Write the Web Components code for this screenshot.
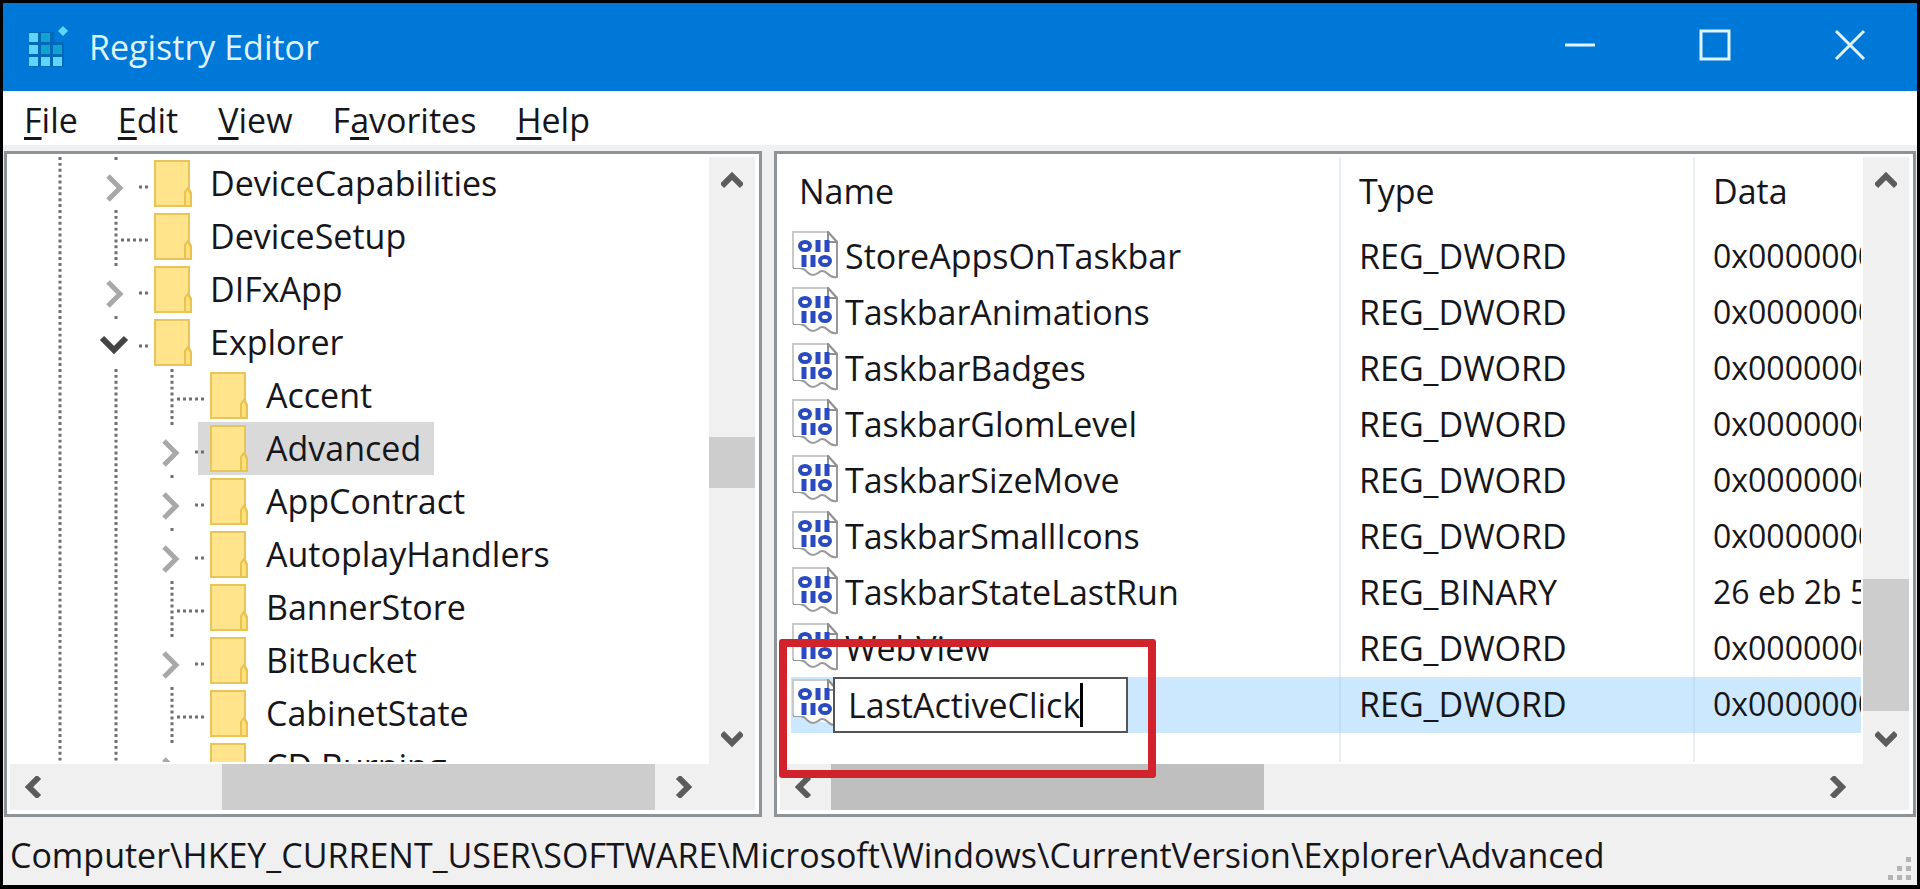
<!DOCTYPE html>
<html lang="en">
<head>
<meta charset="utf-8">
<title>Registry Editor</title>
<style>
  html, body {
    height: 100%;
    margin: 0;
  }
  body {
    background: #000;
    color: #16161a;
    font: 34px/48px "Open Sans", "Noto Sans", sans-serif;
  }
</style>
</head>
<body>
<reg-window>
  <title-bar slot="title">Registry Editor</title-bar>

  <menu-bar slot="menu">
    <menu-item><u>F</u>ile</menu-item>
    <menu-item><u>E</u>dit</menu-item>
    <menu-item><u>V</u>iew</menu-item>
    <menu-item>F<u>a</u>vorites</menu-item>
    <menu-item><u>H</u>elp</menu-item>
  </menu-bar>

  <scroll-pane slot="tree" v="232 51 228" h="164 433 6">
    <div role="tree" aria-label="Keys">
      <tree-key level="1" state="closed">DeviceCapabilities</tree-key>
      <tree-key level="1">DeviceSetup</tree-key>
      <tree-key level="1" state="closed">DIFxApp</tree-key>
      <tree-key level="1" state="open">Explorer</tree-key>
      <tree-key level="2">Accent</tree-key>
      <tree-key level="2" state="closed" selected>Advanced</tree-key>
      <tree-key level="2" state="closed">AppContract</tree-key>
      <tree-key level="2" state="closed">AutoplayHandlers</tree-key>
      <tree-key level="2">BannerStore</tree-key>
      <tree-key level="2" state="closed">BitBucket</tree-key>
      <tree-key level="2">CabinetState</tree-key>
      <tree-key level="2" state="closed">CD Burning</tree-key>
    </div>
  </scroll-pane>

  <scroll-pane slot="values" v="374 132 5" h="3 433 551" active>
    <value-list></value-list>
    <call-out slot="overlay"></call-out>
  </scroll-pane>

  <status-bar slot="status">Computer\HKEY_CURRENT_USER\SOFTWARE\Microsoft\Windows\CurrentVersion\Explorer\Advanced</status-bar>
</reg-window>

<template id="reg-window">
  <style>
    :host {
      display: flex;
      flex-direction: column;
      box-sizing: border-box;
      height: 100vh;
      border: 3px solid #000;
      border-bottom-width: 4px;
      background: #f0f0f0;
    }
    main {
      flex: 1;
      min-height: 0;
      display: grid;
      grid-template-columns: minmax(0, 758fr) minmax(0, 1142fr);
      grid-template-rows: minmax(0, 1fr);
      gap: 12px;
      padding: 0 1px;
    }
  </style>
  <slot name="title"></slot>
  <slot name="menu"></slot>
  <main>
    <slot name="tree"></slot>
    <slot name="values"></slot>
  </main>
  <slot name="status"></slot>
</template>

<template id="title-bar">
  <style>
    :host {
      display: flex;
      align-items: center;
      height: 88px;
      padding-left: 26px;
      background: #0078d7;
      color: #dff4ff;
    }
    .logo {
      margin-right: 18px;
    }
    h1 {
      flex: 1;
      margin: 0;
      font: inherit;
    }
    button {
      width: 135px;
      height: 84px;
      margin-bottom: 4px;
      padding: 0;
      border: 0;
      background: none;
      color: inherit;
    }
    button svg {
      display: block;
      margin: auto;
      fill: none;
      stroke: currentColor;
      stroke-width: 3;
    }
  </style>
  <svg class="logo" width="42" height="42" viewBox="0 0 42 42" aria-hidden="true">
    <path fill="#0068b8" d="M0 6h25v10h10v25H0z"/>
    <g fill="#5fd6ff">
      <path d="M0 7h9v9H0zM0 19h9v9H0zM0 31h9v9H0zM12 31h9v9h-9zM24 31h9v9h-9z"/>
      <path d="M34 0l5 5-5 5-5-5z"/>
    </g>
    <path fill="#0fa3d2" d="M12 7h9v9h-9zM12 19h9v9h-9zM24 19h9v9h-9z"/>
  </svg>
  <h1><slot></slot></h1>
  <button type="button" aria-label="Minimize">
    <svg width="32" height="32" viewBox="0 0 32 32"><path d="M1 16h30"/></svg>
  </button>
  <button type="button" aria-label="Maximize">
    <svg width="32" height="32" viewBox="0 0 32 32"><path d="M2 2h28v28H2z"/></svg>
  </button>
  <button type="button" aria-label="Close">
    <svg width="32" height="32" viewBox="0 0 32 32"><path d="M2 2l28 28M30 2L2 30"/></svg>
  </button>
</template>

<template id="menu-bar">
  <style>
    :host {
      display: flex;
      height: 54px;
      padding-left: 1px;
      border-bottom: 6px solid #f0f0f0;
      background: #fff;
    }
  </style>
  <slot></slot>
</template>

<template id="menu-item">
  <style>
    :host {
      display: block;
    }
    button {
      padding: 5px 20px 0;
      border: 0;
      background: none;
      color: inherit;
      font: inherit;
    }
    ::slotted(u) {
      text-decoration-thickness: 3px;
      text-underline-offset: 4px;
      text-decoration-skip-ink: none;
    }
  </style>
  <button type="button"><slot></slot></button>
</template>

<template id="scroll-pane">
  <style>
    :host {
      position: relative;
      display: grid;
      grid-template: minmax(0, 1fr) 46px / minmax(0, 1fr) 46px;
      min-width: 0;
      border: 3px solid #8e9398;
      padding: 3px 4px 4px 3px;
      background: #fff;
    }
    .view {
      overflow: hidden;
      margin: 0 2px 2px 0;
    }
    .corner {
      background: #f0f0f0;
    }
  </style>
  <div class="view"><slot></slot></div>
  <scroll-bar class="v" vertical></scroll-bar>
  <scroll-bar class="h"></scroll-bar>
  <div class="corner"></div>
  <slot name="overlay"></slot>
</template>

<template id="scroll-bar">
  <style>
    :host {
      display: flex;
      background: #f0f0f0;
    }
    :host([vertical]) {
      flex-direction: column;
    }
    button {
      flex: 0 0 48px;
      display: grid;
      place-items: center;
      padding: 0;
      border: 0;
      background: none;
    }
    svg {
      fill: none;
      stroke: #5c5c5c;
      stroke-width: 6;
    }
    :host([vertical]) svg {
      transform: rotate(90deg);
    }
    .thumb {
      background: #cdcdcd;
    }
    :host([active]:not([vertical])) .thumb {
      background: #bfbfbf;
    }
  </style>
  <button type="button" aria-label="Scroll back">
    <svg width="22" height="22" viewBox="0 0 22 22"><path d="M16 1L6 11l10 10"/></svg>
  </button>
  <div class="before"></div>
  <div class="thumb"></div>
  <div class="after"></div>
  <button type="button" aria-label="Scroll forward">
    <svg width="22" height="22" viewBox="0 0 22 22"><path d="M4 1l10 10L4 21"/></svg>
  </button>
</template>

<template id="tree-key">
  <style>
    :host {
      display: flex;
      height: 53px;
      padding-left: 20px;
      white-space: nowrap;
    }
    svg {
      flex: none;
      display: block;
    }
    .guide {
      overflow: visible;
      position: relative;
      z-index: 1;
      fill: none;
    }
    .dots {
      stroke: #6f6f6f;
      stroke-width: 3;
    }
    .chevron {
      stroke: #a8a8a8;
      stroke-width: 5;
    }
    .chevron.open {
      stroke: #444;
      stroke-width: 6;
    }
    .label {
      display: flex;
      align-items: center;
      padding: 0 13px 0 12px;
    }
    .label span {
      margin: 0 0 2px 18px;
    }
    :host([selected]) .label {
      background: #d9d9d9;
    }
  </style>
  <div class="label">
    <svg width="38" height="47" viewBox="0 0 38 47" aria-hidden="true">
      <path fill="#ffe48c" stroke="#e8c55a" stroke-width="2" d="M1 1h34v28l2 4v13H1z"/>
      <path fill="#ffe07a" stroke="#e8c252" stroke-width="2" d="M31 46V32l3-4 3 6v12z"/>
    </svg>
    <span><slot></slot></span>
  </div>
</template>

<template id="value-list">
  <style>
    :host {
      display: block;
      height: 100%;
      padding-left: 11px;
    }
    table {
      width: 100%;
      table-layout: fixed;
      border-collapse: collapse;
    }
    .name { width: 549px; }
    .type { width: 354px; }
    th, td {
      box-sizing: border-box;
      height: 56px;
      padding: 0;
      overflow: hidden;
      text-align: left;
      font-weight: normal;
      white-space: nowrap;
    }
    th {
      height: 72px;
      padding: 0 0 4px 8px;
    }
    td + td, th + th {
      padding-left: 18px;
      border-left: 2px solid #e9eff5;
    }
    td + td {
      padding-bottom: 2px;
    }
    td.data {
      font-size: 32px;
    }
    tr.selected td {
      background: #cce8ff;
    }
    tr.selected td + td {
      border-left-color: #bfdff6;
    }
    .cell {
      display: flex;
      align-items: center;
      height: 56px;
    }
    .cell svg {
      flex: none;
      margin: 0 7px 4px 1px;
    }
    .cell span {
      margin-bottom: 2px;
    }
    .edit {
      display: flex;
      align-items: center;
      box-sizing: border-box;
      position: relative;
      width: 295px;
      height: 56px;
      margin-left: -12px;
      padding-left: 13px;
      border: 2px solid #555;
      background: #fff;
    }
    input {
      field-sizing: content;
      padding: 0;
      border: 0;
      outline: 0;
      background: none;
      color: inherit;
      font: inherit;
    }
    .caret {
      width: 3px;
      height: 44px;
      background: #000;
    }
  </style>
  <table>
    <thead>
      <tr><th class="name" scope="col">Name</th><th class="type" scope="col">Type</th><th scope="col">Data</th></tr>
    </thead>
    <tbody></tbody>
  </table>
</template>

<template id="call-out">
  <style>
    :host {
      position: absolute;
      top: 485px;
      left: 2px;
      box-sizing: border-box;
      width: 377px;
      height: 139px;
      border: 8px solid #d0232b;
      border-radius: 3px;
      pointer-events: none;
    }
  </style>
</template>

<template id="status-bar">
  <style>
    :host {
      display: flex;
      align-items: center;
      height: 68px;
      padding: 0 5px 0 7px;
      white-space: nowrap;
    }
    .text {
      flex: 1;
      min-width: 0;
      overflow: hidden;
      padding-top: 8px;
    }
    svg {
      align-self: flex-end;
      margin-bottom: 4px;
      fill: #b4b4b4;
    }
  </style>
  <div class="text"><slot></slot></div>
  <svg width="24" height="24" viewBox="0 0 24 24" aria-hidden="true">
    <path d="M18 0h5v5h-5zM9 9h5v5H9zM18 9h5v5h-5zM0 18h5v5H0zM9 18h5v5H9zM18 18h5v5h-5z"/>
  </svg>
</template>

<script>
const values = [
  ["StoreAppsOnTaskbar", "REG_DWORD", "0x00000001 (1)"],
  ["TaskbarAnimations", "REG_DWORD", "0x00000001 (1)"],
  ["TaskbarBadges", "REG_DWORD", "0x00000001 (1)"],
  ["TaskbarGlomLevel", "REG_DWORD", "0x00000000 (0)"],
  ["TaskbarSizeMove", "REG_DWORD", "0x00000000 (0)"],
  ["TaskbarSmallIcons", "REG_DWORD", "0x00000000 (0)"],
  ["TaskbarStateLastRun", "REG_BINARY", "26 eb 2b 58"],
  ["WebView", "REG_DWORD", "0x00000001 (1)"],
  ["LastActiveClick", "REG_DWORD", "0x00000000 (0)"],
];

const binaryIcon = `
<svg width="46" height="48" viewBox="0 0 46 48" aria-hidden="true">
  <path fill="#fff" stroke="#c9c9c9" stroke-width="2" d="M1 37V1h35l9 10v35"/>
  <path fill="#fff" stroke="#999" stroke-width="2" d="M45 11v35c-4 1-6 0-9-3-4-4-7-4-10-1-4 3-8 2-11-1-2-3-5-4-9-4H1"/>
  <path fill="#fff" d="M2 8h42v29H2z"/>
  <path fill="#fff" stroke="#8f8f8f" stroke-width="2" d="M36 1v10h9z"/>
  <g fill="none" stroke="#2a4ac0" stroke-width="4">
    <ellipse cx="13" cy="15" rx="5" ry="4"/>
    <ellipse cx="33" cy="30" rx="5" ry="4"/>
    <path stroke-width="5" d="M26 9v12M35 9v12M12 24v12M21 24v12"/>
  </g>
</svg>`;

class BaseElement extends HTMLElement {
  constructor() {
    super();
    const template = document.getElementById(this.localName);
    this.attachShadow({ mode: "open" }).appendChild(
      template.content.cloneNode(true)
    );
  }
}

["reg-window", "title-bar", "menu-bar", "menu-item", "call-out", "status-bar"].forEach((name) => {
  customElements.define(name, class extends BaseElement {});
});

customElements.define(
  "scroll-bar",
  class extends BaseElement {
    // parts: space before the thumb, the thumb, space after it
    setParts(parts) {
      const [before, thumb, after] = parts.split(" ");
      this.shadowRoot.querySelector(".before").style.flex = `${before} 0 0`;
      this.shadowRoot.querySelector(".thumb").style.flex = `${thumb} 0 0`;
      this.shadowRoot.querySelector(".after").style.flex = `${after} 0 0`;
    }
  }
);

customElements.define(
  "scroll-pane",
  class extends BaseElement {
    connectedCallback() {
      ["v", "h"].forEach((axis) => {
        const bar = this.shadowRoot.querySelector(`.${axis}`);
        bar.setParts(this.getAttribute(axis));
        bar.toggleAttribute("active", this.hasAttribute("active"));
      });
    }
  }
);

customElements.define(
  "tree-key",
  class extends BaseElement {
    connectedCallback() {
      const level = Number(this.getAttribute("level"));
      const state = this.getAttribute("state");
      this.setAttribute("role", "treeitem");
      this.setAttribute("aria-level", level);
      if (state) {
        this.setAttribute("aria-expanded", state === "open");
      }

      const line = `<path class="dots" pathLength="54" stroke-dasharray="3 3" d="M30 0v53"/>`;
      const cells = Array(level).fill(line);
      cells.push(state ? this.#expander(state) : this.#leaf(line));

      const guides = cells
        .map((cell) => `<svg class="guide" width="56" height="53" viewBox="0 0 56 53" aria-hidden="true">${cell}</svg>`)
        .join("");
      this.shadowRoot.querySelector(".label").insertAdjacentHTML("beforebegin", guides);
    }

    #leaf(line) {
      return `${line}<path class="dots" stroke-dasharray="3 3" d="M35 30h27"/>`;
    }

    #expander(state) {
      const chevron =
        state === "open"
          ? `<path class="chevron open" d="M16 22l12 12 12-12"/>`
          : `<path class="chevron" d="M22 19l12 12-12 12"/>`;
      return `<path class="dots" d="M30 0v3"/><path class="dots" stroke-dasharray="3 3" d="M53 30h9"/>${chevron}`;
    }
  }
);

customElements.define(
  "value-list",
  class extends BaseElement {
    connectedCallback() {
      const body = this.shadowRoot.querySelector("tbody");
      values.forEach(([name, type, data], i) => {
        const editing = i === values.length - 1;
        const label = editing
          ? `<div class="edit"><input type="text" aria-label="Value name" value="${name}"><div class="caret"></div></div>`
          : `<span>${name}</span>`;
        body.insertAdjacentHTML(
          "beforeend",
          `<tr class="${editing ? "selected" : ""}">
            <td><div class="cell">${binaryIcon}${label}</div></td><td>${type}</td><td class="data">${data}</td>
          </tr>`
        );
      });
      // empty row carries the column lines down to the scroll bar
      body.insertAdjacentHTML("beforeend", "<tr><td></td><td></td><td></td></tr>");
    }
  }
);
</script>
</body>
</html>
